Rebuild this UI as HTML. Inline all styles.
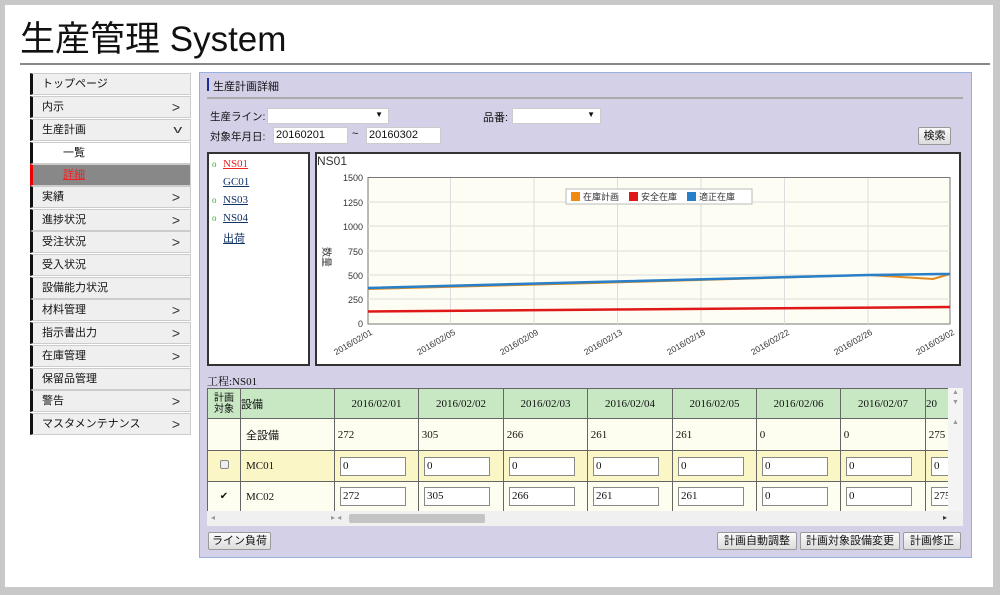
<!DOCTYPE html><html><head><meta charset="utf-8"><style>
*{box-sizing:border-box;margin:0;padding:0}
body{width:1000px;height:595px;background:#c8c8c8;position:relative;overflow:hidden;font-family:"Liberation Sans","Noto Sans CJK JP",sans-serif;font-size:11px;color:#111}
.a{position:absolute;white-space:nowrap}
#w{left:5px;top:5px;width:988px;height:582px;background:#fff}
h1{position:absolute;left:20px;top:20px;font-size:35px;line-height:40px;font-weight:normal;font-family:"Liberation Sans","Noto Sans CJK JP",sans-serif}
.nav{left:30px;width:161px;height:22px;background:#efefef;border:1px solid #ccc;border-left:3px solid #111;padding-left:9px;line-height:20px;font-size:11px}
.nav i{position:absolute;right:10px;top:0;font-style:normal;font-size:14px;color:#333}
.box{background:#fff;border:1px solid #ccc;height:16px}
.btn{background:linear-gradient(#fafafa,#ddd);border:1px solid #999;border-radius:2px;height:18px;line-height:16px;text-align:center;font-size:11px}
td{border:1px solid #666;font-family:"Liberation Serif","Noto Serif CJK SC",serif;font-size:11px}
</style></head><body>
<div id="w" class="a"></div>
<h1>生産管理 System</h1>
<div class="a" style="left:20px;top:63px;width:970px;height:2px;background:#888"></div>

<div class="a nav" style="top:73px">トップページ</div>
<div class="a nav" style="top:96px">内示<i>&gt;</i></div>
<div class="a nav" style="top:119px">生産計画<i style="font-size:11px;transform:scaleX(1.6)">v</i></div>
<div class="a nav" style="top:142px;background:#fff;padding-left:30px">一覧</div>
<div class="a nav" style="top:164px;background:#888;border-left-color:#e00;padding-left:30px;color:#e22;text-decoration:underline">詳細</div>
<div class="a nav" style="top:186px">実績<i>&gt;</i></div>
<div class="a nav" style="top:209px">進捗状況<i>&gt;</i></div>
<div class="a nav" style="top:231px">受注状況<i>&gt;</i></div>
<div class="a nav" style="top:254px">受入状況</div>
<div class="a nav" style="top:277px">設備能力状況</div>
<div class="a nav" style="top:299px">材料管理<i>&gt;</i></div>
<div class="a nav" style="top:322px">指示書出力<i>&gt;</i></div>
<div class="a nav" style="top:345px">在庫管理<i>&gt;</i></div>
<div class="a nav" style="top:368px">保留品管理</div>
<div class="a nav" style="top:390px">警告<i>&gt;</i></div>
<div class="a nav" style="top:413px">マスタメンテナンス<i>&gt;</i></div>

<div class="a" style="left:199px;top:72px;width:773px;height:486px;background:#d3d0e8;border:1px solid #9ab0dc"></div>
<div class="a" style="left:207px;top:78px;width:2px;height:13px;background:#1a2a9a"></div>
<div class="a" style="left:213px;top:78px">生産計画詳細</div>
<div class="a" style="left:207px;top:97px;width:756px;height:2px;background:#aaa"></div>
<div class="a" style="left:210px;top:109px;font-size:10.5px">生産ライン:</div>
<div class="a box" style="left:267px;top:108px;width:122px"><span class="a" style="right:5px;top:1px;font-size:8px">▼</span></div>
<div class="a" style="left:483px;top:109px">品番:</div>
<div class="a box" style="left:512px;top:108px;width:89px"><span class="a" style="right:5px;top:1px;font-size:8px">▼</span></div>
<div class="a" style="left:210px;top:129px;font-size:10.5px">対象年月日:</div>
<div class="a box" style="left:273px;top:127px;width:75px;height:17px;padding:1px 2px">20160201</div>
<div class="a" style="left:352px;top:128px">~</div>
<div class="a box" style="left:366px;top:127px;width:75px;height:17px;padding:1px 2px">20160302</div>
<div class="a btn" style="left:918px;top:127px;width:33px">検索</div>

<div class="a" style="left:207px;top:152px;width:103px;height:214px;background:#fff;border:2px solid #333;font-family:'Liberation Serif',serif">
<div class="a" style="left:3px;top:5px;color:#3a3;font-size:9px">o</div><div class="a" style="left:14px;top:4px;color:#e22;text-decoration:underline">NS01</div>
<div class="a" style="left:14px;top:22px;color:#136;text-decoration:underline">GC01</div>
<div class="a" style="left:3px;top:41px;color:#3a3;font-size:9px">o</div><div class="a" style="left:14px;top:40px;color:#136;text-decoration:underline">NS03</div>
<div class="a" style="left:3px;top:59px;color:#3a3;font-size:9px">o</div><div class="a" style="left:14px;top:58px;color:#136;text-decoration:underline">NS04</div>
<div class="a" style="left:14px;top:76px;color:#136;text-decoration:underline">出荷</div>
</div>
<div class="a" style="left:315px;top:152px;width:646px;height:214px;background:#fff;border:2px solid #333"></div>
<svg class="a" style="left:315px;top:152px" width="646" height="214" font-family="Liberation Sans,sans-serif" font-size="9" fill="#333">
<text x="2" y="13" font-size="12">NS01</text>
<rect x="53" y="25.5" width="582" height="146.5" fill="#fdfdf3" stroke="#777"/>
<g stroke="#ddd"><line x1="135.5" y1="26" x2="135.5" y2="172"/><line x1="219" y1="26" x2="219" y2="172"/><line x1="302.5" y1="26" x2="302.5" y2="172"/><line x1="386" y1="26" x2="386" y2="172"/><line x1="469.5" y1="26" x2="469.5" y2="172"/><line x1="553" y1="26" x2="553" y2="172"/>
<line x1="53" y1="50" x2="635" y2="50"/><line x1="53" y1="74" x2="635" y2="74"/><line x1="53" y1="99" x2="635" y2="99"/><line x1="53" y1="123" x2="635" y2="123"/><line x1="53" y1="147" x2="635" y2="147"/></g>
<g text-anchor="end"><text x="48" y="29">1500</text><text x="48" y="54">1250</text><text x="48" y="78">1000</text><text x="48" y="103">750</text><text x="48" y="127">500</text><text x="48" y="151">250</text><text x="48" y="175">0</text></g>
<text x="0" y="0" transform="translate(8,95) rotate(90)" font-size="10">数量</text>
<polyline points="53,137 280,131 553,123 618,127 635,122" fill="none" stroke="#e08a20" stroke-width="2"/>
<polyline points="53,136 280,130 553,123 625,122 635,122" fill="none" stroke="#2a80c8" stroke-width="2.5"/>
<polyline points="53,159.5 300,157.5 635,155" fill="none" stroke="#e01818" stroke-width="2.5"/>
<rect x="251" y="37" width="186" height="15" fill="#fff" stroke="#bbb"/>
<rect x="256" y="40" width="9" height="9" fill="#f08a10"/><text x="268" y="48">在庫計画</text>
<rect x="314" y="40" width="9" height="9" fill="#e01818"/><text x="326" y="48">安全在庫</text>
<rect x="372" y="40" width="9" height="9" fill="#2a80c8"/><text x="384" y="48">適正在庫</text>
<g text-anchor="end" font-size="8.5">
<text transform="translate(58,182) rotate(-30)">2016/02/01</text><text transform="translate(141,182) rotate(-30)">2016/02/05</text><text transform="translate(224,182) rotate(-30)">2016/02/09</text><text transform="translate(308,182) rotate(-30)">2016/02/13</text><text transform="translate(391,182) rotate(-30)">2016/02/18</text><text transform="translate(475,182) rotate(-30)">2016/02/22</text><text transform="translate(558,182) rotate(-30)">2016/02/26</text><text transform="translate(640,182) rotate(-30)">2016/03/02</text></g>
</svg>

<div class="a" style="left:207px;top:373px;font-family:'Liberation Serif','Noto Serif CJK SC',serif">工程:NS01</div>
<div class="a" style="left:207px;top:388px;width:756px;height:138px;background:#fff;overflow:hidden">
<table class="a" style="left:0;top:0;border-collapse:collapse;table-layout:fixed;width:760px">
<colgroup><col style="width:33px"><col style="width:94px"><col style="width:84px"><col style="width:85px"><col style="width:84px"><col style="width:85px"><col style="width:84px"><col style="width:84px"><col style="width:85px"><col style="width:42px"></colgroup>
<tr style="height:30px;background:#c8e8c4;text-align:center"><td style="font-size:10px;line-height:11px;font-family:'Liberation Sans','Noto Sans CJK JP',sans-serif">計画<br>対象</td><td style="text-align:left;font-family:'Liberation Sans','Noto Sans CJK JP',sans-serif">設備</td><td>2016/02/01</td><td>2016/02/02</td><td>2016/02/03</td><td>2016/02/04</td><td>2016/02/05</td><td>2016/02/06</td><td>2016/02/07</td><td style="text-align:left">20</td></tr>
<tr style="height:32px;background:#fefef0"><td></td><td style="padding-left:5px;font-family:'Liberation Sans','Noto Sans CJK JP',sans-serif">全設備</td><td>&nbsp;272</td><td>&nbsp;305</td><td>&nbsp;266</td><td>&nbsp;261</td><td>&nbsp;261</td><td>&nbsp;0</td><td>&nbsp;0</td><td>&nbsp;275</td></tr>
<tr style="height:31px;background:#faf6c6"><td style="text-align:center"><span style="display:inline-block;width:9px;height:9px;border:1px solid #888;background:#eee;border-radius:2px"></span></td><td style="padding-left:5px">MC01</td>
<td><div style="margin-left:5px;width:66px;height:19px;border:1px solid #888;background:#fff;padding:2px">0</div></td><td><div style="margin-left:5px;width:66px;height:19px;border:1px solid #888;background:#fff;padding:2px">0</div></td><td><div style="margin-left:5px;width:66px;height:19px;border:1px solid #888;background:#fff;padding:2px">0</div></td><td><div style="margin-left:5px;width:66px;height:19px;border:1px solid #888;background:#fff;padding:2px">0</div></td><td><div style="margin-left:5px;width:66px;height:19px;border:1px solid #888;background:#fff;padding:2px">0</div></td><td><div style="margin-left:5px;width:66px;height:19px;border:1px solid #888;background:#fff;padding:2px">0</div></td><td><div style="margin-left:5px;width:66px;height:19px;border:1px solid #888;background:#fff;padding:2px">0</div></td><td><div style="margin-left:5px;width:66px;height:19px;border:1px solid #888;background:#fff;padding:2px">0</div></td></tr>
<tr style="height:30px;background:#fefef0"><td style="text-align:center;font-size:10px">✔</td><td style="padding-left:5px">MC02</td>
<td><div style="margin-left:5px;width:66px;height:19px;border:1px solid #888;background:#fff;padding:2px">272</div></td><td><div style="margin-left:5px;width:66px;height:19px;border:1px solid #888;background:#fff;padding:2px">305</div></td><td><div style="margin-left:5px;width:66px;height:19px;border:1px solid #888;background:#fff;padding:2px">266</div></td><td><div style="margin-left:5px;width:66px;height:19px;border:1px solid #888;background:#fff;padding:2px">261</div></td><td><div style="margin-left:5px;width:66px;height:19px;border:1px solid #888;background:#fff;padding:2px">261</div></td><td><div style="margin-left:5px;width:66px;height:19px;border:1px solid #888;background:#fff;padding:2px">0</div></td><td><div style="margin-left:5px;width:66px;height:19px;border:1px solid #888;background:#fff;padding:2px">0</div></td><td><div style="margin-left:5px;width:66px;height:19px;border:1px solid #888;background:#fff;padding:2px">275</div></td></tr>
</table>
<div class="a" style="left:741px;top:0;width:15px;height:124px;background:#f4f4f4;color:#999;font-size:7px;text-align:center;line-height:10px">▲<br>▼<br><br>▲</div>
<div class="a" style="left:0;top:123px;width:756px;height:15px;background:#f0f0f0"></div>
<div class="a" style="left:142px;top:126px;width:136px;height:9px;background:#c4c4c4;border-radius:2px"></div>
<div class="a" style="left:4px;top:125px;font-size:8px;color:#999">◂</div>
<div class="a" style="left:124px;top:125px;font-size:8px;color:#999">▸ ◂</div>
<div class="a" style="left:736px;top:125px;font-size:8px;color:#333">▸</div>
</div>
<div class="a btn" style="left:208px;top:532px;width:63px">ライン負荷</div>
<div class="a btn" style="left:717px;top:532px;width:80px">計画自動調整</div>
<div class="a btn" style="left:800px;top:532px;width:100px">計画対象設備変更</div>
<div class="a btn" style="left:903px;top:532px;width:58px">計画修正</div>
</body></html>
